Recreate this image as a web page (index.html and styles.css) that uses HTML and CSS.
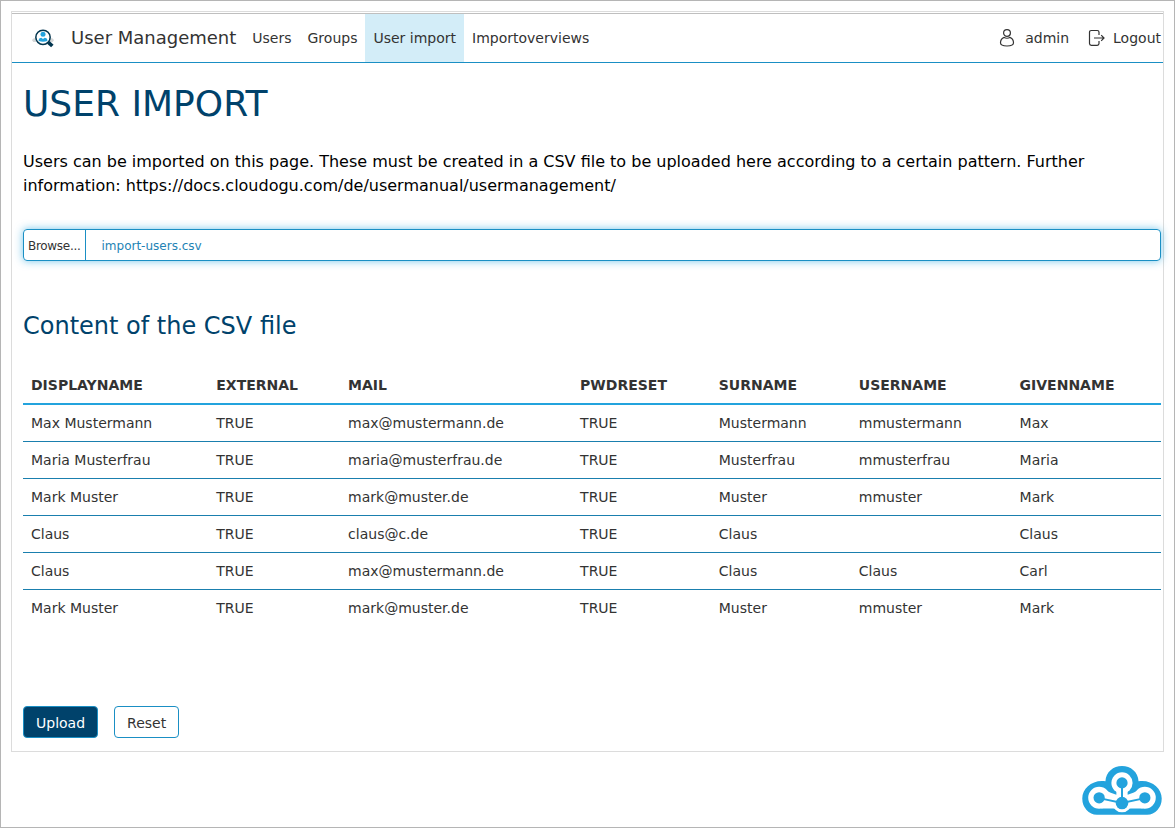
FILE: index.html
```html
<!DOCTYPE html>
<html lang="en">
<head>
<meta charset="utf-8">
<title>User Management</title>
<link rel="stylesheet" href="styles.css">
</head>
<body>
<div class="page">
  <div class="panel">
    <nav class="nav">
      <svg class="brand-icon" viewBox="0 0 66 60">
        <path d="M0 37c2-6 6-6 10-7V18c3-4 8-2 10 0v24H4zM66 37c-2-6-6-6-10-7V18c-3-4-8-2-10 0v24h16z" fill="#d5d7d8"/>
        <circle cx="33" cy="28" r="21.5" fill="#fff" stroke="#00354f" stroke-width="4.5"/>
        <circle cx="33" cy="19" r="7.5" fill="#23a3dd"/>
        <path d="M20 39v-4q1-6 8-6l5 4 5-4q7 0 8 6v4q-13 5-26 0z" fill="#23a3dd"/>
        <path d="M49 43l12 11" stroke="#00354f" stroke-width="11"/>
      </svg>
      <span class="brand">User Management</span>
      <a class="link">Users</a>
      <a class="link">Groups</a>
      <a class="link active">User import</a>
      <a class="link">Importoverviews</a>
      <div class="account">
        <svg class="user-icon" viewBox="0 0 16 20"><circle cx="8" cy="5" r="3.4"/><path d="M5.2 9.4C2.8 10.3 1.5 12.5 1.5 14.8c0 2 2.6 3.2 6.5 3.2s6.5-1.2 6.5-3.2c0-2.3-1.3-4.5-3.7-5.4C9.4 10.5 6.6 10.5 5.2 9.4z"/></svg>
        <span>admin</span>
        <svg class="logout-icon" viewBox="0 0 18 20"><path d="M11 7V4.2Q11 2.5 9.2 2.5H3.3Q1.5 2.5 1.5 4.2V15.6Q1.5 17.3 3.3 17.3H9.2Q11 17.3 11 15.6V13M6 10H16M13.2 7.2L16 10l-2.8 2.8"/></svg>
        <span>Logout</span>
      </div>
    </nav>
    <main class="content">
      <h1 class="title">USER IMPORT</h1>
      <p class="intro">Users can be imported on this page. These must be created in a CSV file to be uploaded here according to a certain pattern. Further information: https://docs.cloudogu.com/de/usermanual/usermanagement/</p>
      <div class="file"><span class="browse">Browse...</span><span class="filename">import-users.csv</span></div>
      <h2 class="subtitle">Content of the CSV file</h2>
      <table class="table">
        <colgroup><col class="c1"><col class="c2"><col class="c3"><col class="c4"><col class="c5"><col class="c6"><col></colgroup>
        <thead><tr><th>DISPLAYNAME</th><th>EXTERNAL</th><th>MAIL</th><th>PWDRESET</th><th>SURNAME</th><th>USERNAME</th><th>GIVENNAME</th></tr></thead>
        <tbody>
          <tr><td>Max Mustermann</td><td>TRUE</td><td>max@mustermann.de</td><td>TRUE</td><td>Mustermann</td><td>mmustermann</td><td>Max</td></tr>
          <tr><td>Maria Musterfrau</td><td>TRUE</td><td>maria@musterfrau.de</td><td>TRUE</td><td>Musterfrau</td><td>mmusterfrau</td><td>Maria</td></tr>
          <tr><td>Mark Muster</td><td>TRUE</td><td>mark@muster.de</td><td>TRUE</td><td>Muster</td><td>mmuster</td><td>Mark</td></tr>
          <tr><td>Claus</td><td>TRUE</td><td>claus@c.de</td><td>TRUE</td><td>Claus</td><td></td><td>Claus</td></tr>
          <tr><td>Claus</td><td>TRUE</td><td>max@mustermann.de</td><td>TRUE</td><td>Claus</td><td>Claus</td><td>Carl</td></tr>
          <tr><td>Mark Muster</td><td>TRUE</td><td>mark@muster.de</td><td>TRUE</td><td>Muster</td><td>mmuster</td><td>Mark</td></tr>
        </tbody>
      </table>
      <div class="actions"><button class="btn primary">Upload</button><button class="btn">Reset</button></div>
    </main>
  </div>
  <footer class="footer">
    <svg class="cloud" viewBox="0 0 240 148">
      <path d="M44 147A44 49 0 0 1 0 98C0 66 32 40 70 46 71 18 94 0 120 0s49 18 50 46c38-6 70 20 70 52a44 49 0 0 1-44 49z" fill="#23a3dd"/>
      <g fill="#fff">
        <circle cx="120" cy="51" r="32"/><circle cx="51" cy="96" r="33"/><circle cx="189" cy="96" r="33"/>
        <path d="M103 75h34v12l17-6 16-8-5 50-25 5h-40l-25-5-5-50 16 8 17 6z"/><circle cx="120" cy="112" r="28"/>
        <path d="M51 106h138l-7 22H58z"/>
      </g>
      <path d="M120 51v61M51 97l69 15 69-15" fill="none" stroke="#23a3dd" stroke-width="6"/>
      <g fill="#23a3dd"><circle cx="120" cy="51" r="17"/><circle cx="51" cy="96" r="17"/><circle cx="189" cy="96" r="17"/><circle cx="120" cy="112" r="19"/></g>
    </svg>
  </footer>
</div>
</body>
</html>
```
FILE: styles.css
```css
* { box-sizing: border-box; }
body { margin: 0; background: #fff; color: #333; font: 14px "DejaVu Sans", sans-serif; }
.page { height: 828px; border: 1px solid #b5b5b5; padding: 10px 11px 0 10px; }
.panel { height: 741px; width: 1153px; border: 1px solid #dcdcdc; padding-top: 1px; }
.nav { display: flex; align-items: center; height: 50px; border-top: 1px solid #bfbfbf; border-bottom: 1px solid #1a8fc4; padding-left: 20px; }
.brand-icon { width: 22px; height: 20px; margin-right: 17px; }
.brand { font-size: 18px; margin-right: 7.3px; width: 166px; padding-bottom: 2px; white-space: nowrap; }
.link { display: flex; align-items: center; height: 48px; padding: 0 8px; }
.active { background: #d3edf8; }
.account { display: flex; align-items: center; margin-left: auto; padding-right: 2px; }
.account svg { fill: none; stroke: #333; stroke-width: 1.2; }
.user-icon { width: 16px; height: 20px; margin-right: 10px; }
.logout-icon { width: 18px; height: 20px; margin: 0 7px 0 19px; }
.content { padding: 0 2px 0 11px; }
.title { margin: 19px 0 0; font-size: 36px; line-height: 43px; font-weight: 400; color: #00426b; }
.intro { margin: 25px 0 0; color: #000; font-size: 16px; line-height: 24px; }
.file { display: flex; height: 32px; margin-top: 31px; border: 1px solid #1a8fc4; border-radius: 4px; box-shadow: 0 0 8px #23a3dda0; font-size: 12px; line-height: 32px; }
.browse { width: 62px; padding-left: 4px; border-right: 1px solid #1a8fc4; letter-spacing: -.3px; height: 30px; }
.filename { padding-left: 15.5px; color: #2383b5; height: 30px; }
.subtitle { margin: 51px 0 0; font-size: 24px; line-height: 29px; font-weight: 400; color: #00426b; }
.table { width: 100%; margin-top: 25px; border-collapse: separate; border-spacing: 0; table-layout: fixed; }
.table th, .table td { height: 37px; padding: 0 8px; text-align: left; line-height: 20px; }
.table th { height: 39px; border-bottom: 2px solid #23a3dd; }
.table td { border-bottom: 1px solid #1a7fae; }
.table tr:last-child td { border-bottom-color: transparent; }
.table thead tr:last-child th { border-bottom-color: #23a3dd; }
.c1 { width: 185.3px; }
.c2 { width: 131.8px; }
.c3 { width: 232px; }
.c4 { width: 138.7px; }
.c5 { width: 140px; }
.c6 { width: 160.8px; }
.actions { display: flex; gap: 16px; margin-top: 79px; }
.btn { height: 32px; padding: 2px 12px 0; border: 1px solid #1a8fc4; border-radius: 4px; background: #fff; color: #333; font: inherit; }
.primary { background: #00426b; color: #fff; }
.footer { display: flex; justify-content: flex-end; padding: 14px 1px 0 0; }
.cloud { width: 80px; height: 49px; }
```
